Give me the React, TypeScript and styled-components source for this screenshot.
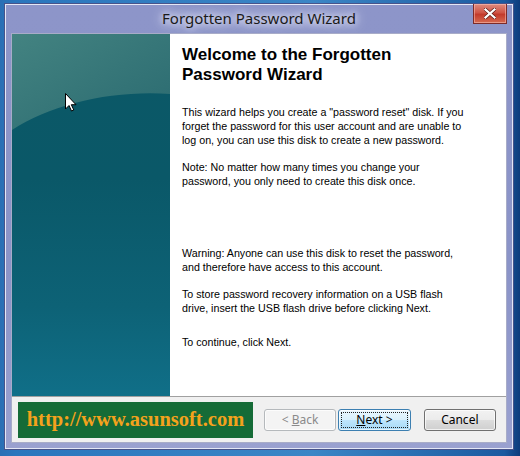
import React from 'react'
import styled, { createGlobalStyle } from 'styled-components'

const GlobalStyle = createGlobalStyle`
  html, body {
    margin: 0;
    padding: 0;
  }
  body {
    width: 520px;
    height: 456px;
    overflow: hidden;
    font-family: 'Liberation Sans', Arial, sans-serif;
  }
`

const Desktop = styled('div')`
  width: 520px;
  height: 456px;
  box-sizing: border-box;
  padding: 4px 7px 7px 5px;
  background: linear-gradient(90deg, #2a6fb4 0%, #2a76bd 3%, #3b86c6 60%, #1b5aa0 97%, #0d3c7c 100%);
  position: relative;
`

const Window = styled('div')`
  height: 100%;
  box-sizing: border-box;
  border: 1px solid #e4e7f5;
  background: linear-gradient(180deg, #8d95c9 0%, #8b94c8 60%, #9aa1d0 100%);
  display: flex;
  flex-direction: column;
  padding: 0 5px 5px 5px;
  box-shadow: 0 0 0 1px #47538a;
`

const TitleBar = styled('div')`
  height: 28px;
  display: grid;
  grid-template-columns: 1fr auto 1fr;
  align-items: start;
`

const Title = styled('div')`
  grid-column: 2;
  align-self: center;
  font-family: 'Noto Sans', 'Open Sans', sans-serif;
  font-size: 15px;
  color: #1a1a1a;
  padding: 0 14px;
  margin-top: -2px;
  text-shadow: 0 0 6px #e4e6f5, 0 0 10px #dfe2f4, 0 0 14px #dfe2f4;
`

const CloseButton = styled('div')`
  grid-column: 3;
  justify-self: end;
  margin-top: -1px;
  width: 34px;
  height: 20px;
  box-sizing: border-box;
  border: 1px solid #7d2b28;
  border-top: none;
  background: linear-gradient(180deg, #e08b7f 0%, #cf5546 45%, #c33a2b 55%, #d66a50 100%);
  display: flex;
  align-items: center;
  justify-content: center;
  box-shadow: inset 0 0 0 1px rgba(255, 200, 190, 0.5);
`

const Client = styled('div')`
  flex: 1;
  display: flex;
  flex-direction: column;
  background: #f0f0f0;
  border: 1px solid #a8acc8;
`

const Main = styled('div')`
  height: 362px;
  display: flex;
  background: #ffffff;
  border-bottom: 1px solid #a0a0a0;
`

const SidePanel = styled('div')`
  width: 158px;
  position: relative;
  overflow: hidden;
  background: linear-gradient(180deg, #0b5866 0%, #0a5868 40%, #0d6276 75%, #106f88 100%);
`

const Content = styled('div')`
  flex: 1;
  padding: 11px 20px 0 12px;
  color: #000;
`

const Heading = styled('h1')`
  margin: 0 0 20px 0;
  font-family: 'Liberation Sans', Arial, sans-serif;
  font-weight: bold;
  font-size: 17px;
  line-height: 20px;
`

const Paragraph = styled('p')<{ $gap: number }>`
  margin: 0 0 ${(p) => p.$gap}px 0;
  font-family: 'Liberation Sans', Arial, sans-serif;
  font-size: 10.7px;
  line-height: 14px;
  white-space: nowrap;
`

const Footer = styled('div')`
  flex: 1;
  display: flex;
  align-items: center;
  padding: 0 10px 0 6px;
`

const Banner = styled('div')`
  width: 237px;
  height: 36px;
  background: #156b37;
  display: flex;
  align-items: center;
  justify-content: center;
  font-family: 'Liberation Serif', 'Times New Roman', serif;
  font-weight: bold;
  font-size: 20.5px;
  color: #f4a21c;
  margin-right: 9px;
`

const Button = styled('div')<{ $variant?: 'disabled' | 'focused' }>`
  width: 73px;
  height: 22px;
  box-sizing: border-box;
  border-radius: 3px;
  margin-left: 2px;
  display: flex;
  align-items: center;
  justify-content: center;
  font-family: 'Noto Sans', 'Open Sans', sans-serif;
  font-size: 12px;
  white-space: pre;
  position: relative;
  border: 1px solid ${(p) => (p.$variant === 'disabled' ? '#b5b9bc' : p.$variant === 'focused' ? '#3c7fb1' : '#707070')};
  color: ${(p) => (p.$variant === 'disabled' ? '#8a8a8a' : '#000')};
  background: ${(p) =>
    p.$variant === 'disabled'
      ? '#f4f4f4'
      : p.$variant === 'focused'
        ? 'linear-gradient(180deg, #eaf6fd 0%, #d9f0fc 50%, #bee6fd 51%, #a7d9f5 100%)'
        : 'linear-gradient(180deg, #f2f2f2 0%, #ebebeb 50%, #dddddd 51%, #cfcfcf 100%)'};
  box-shadow: inset 0 0 0 1px rgba(255, 255, 255, 0.7);
`

const FocusRing = styled('span')`
  position: absolute;
  inset: 2px;
  border: 1px dotted #222;
`

const CancelButton = styled(Button)`
  margin-left: 13px;
`

const Cursor = styled('svg')`
  position: absolute;
  left: 65px;
  top: 93px;
`

const paragraphs = [
  {
    lines: [
      'This wizard helps you create a "password reset" disk. If you',
      'forget the password for this user account and are unable to',
      'log on, you can use this disk to create a new password.'
    ],
    gap: 13
  },
  { lines: ['Note: No matter how many times you change your', 'password, you only need to create this disk once.'], gap: 58 },
  { lines: ['Warning: Anyone can use this disk to reset the password,', 'and therefore have access to this account.'], gap: 13 },
  { lines: ['To store password recovery information on a USB flash', 'drive, insert the USB flash drive before clicking Next.'], gap: 20 },
  { lines: ['To continue, click Next.'], gap: 0 }
]

function SideArt() {
  return (
    <svg width="158" height="362" viewBox="0 0 158 362" style={{ position: 'absolute', inset: 0 }}>
      <defs>
        <linearGradient id="top" x1="0" y1="0" x2="1" y2="1">
          <stop offset="0" stopColor="#438381" />
          <stop offset="1" stopColor="#2a6a70" />
        </linearGradient>
      </defs>
      <path d="M0 0 H158 V60 C100 56 40 70 0 96 Z" fill="url(#top)" />
    </svg>
  )
}

function App() {
  return (
    <>
      <GlobalStyle />
      <Desktop>
        <Window>
          <TitleBar>
            <Title>Forgotten Password Wizard</Title>
            <CloseButton>
              <svg width="12" height="11" viewBox="0 0 12 11">
                <path d="M1.5 1.5 L10.5 9.5 M10.5 1.5 L1.5 9.5" stroke="#5a1a16" strokeWidth="3.6" strokeLinecap="square" />
                <path d="M1.5 1.5 L10.5 9.5 M10.5 1.5 L1.5 9.5" stroke="#ffffff" strokeWidth="2.2" strokeLinecap="square" />
              </svg>
            </CloseButton>
          </TitleBar>
          <Client>
            <Main>
              <SidePanel>
                <SideArt />
              </SidePanel>
              <Content>
                <Heading>
                  Welcome to the Forgotten
                  <br />
                  Password Wizard
                </Heading>
                {paragraphs.map((p) => (
                  <Paragraph key={p.lines[0]} $gap={p.gap}>
                    {p.lines.map((line, i) => (
                      <React.Fragment key={line}>
                        {i > 0 && <br />}
                        {line}
                      </React.Fragment>
                    ))}
                  </Paragraph>
                ))}
              </Content>
            </Main>
            <Footer>
              <Banner>http://www.asunsoft.com</Banner>
              <Button $variant="disabled">
                {'< '}<u>B</u>ack
              </Button>
              <Button $variant="focused">
                <FocusRing />
                <u>N</u>ext{' >'}
              </Button>
              <CancelButton>Cancel</CancelButton>
            </Footer>
          </Client>
        </Window>
        <Cursor width="12" height="19" viewBox="0 0 12 19">
          <path d="M0.5 0.5 V16 L4 12.5 L6.5 18 L8.8 17 L6.3 11.7 L11 11.7 Z" fill="#fff" stroke="#000" strokeWidth="1" />
        </Cursor>
      </Desktop>
    </>
  )
}

export default App
